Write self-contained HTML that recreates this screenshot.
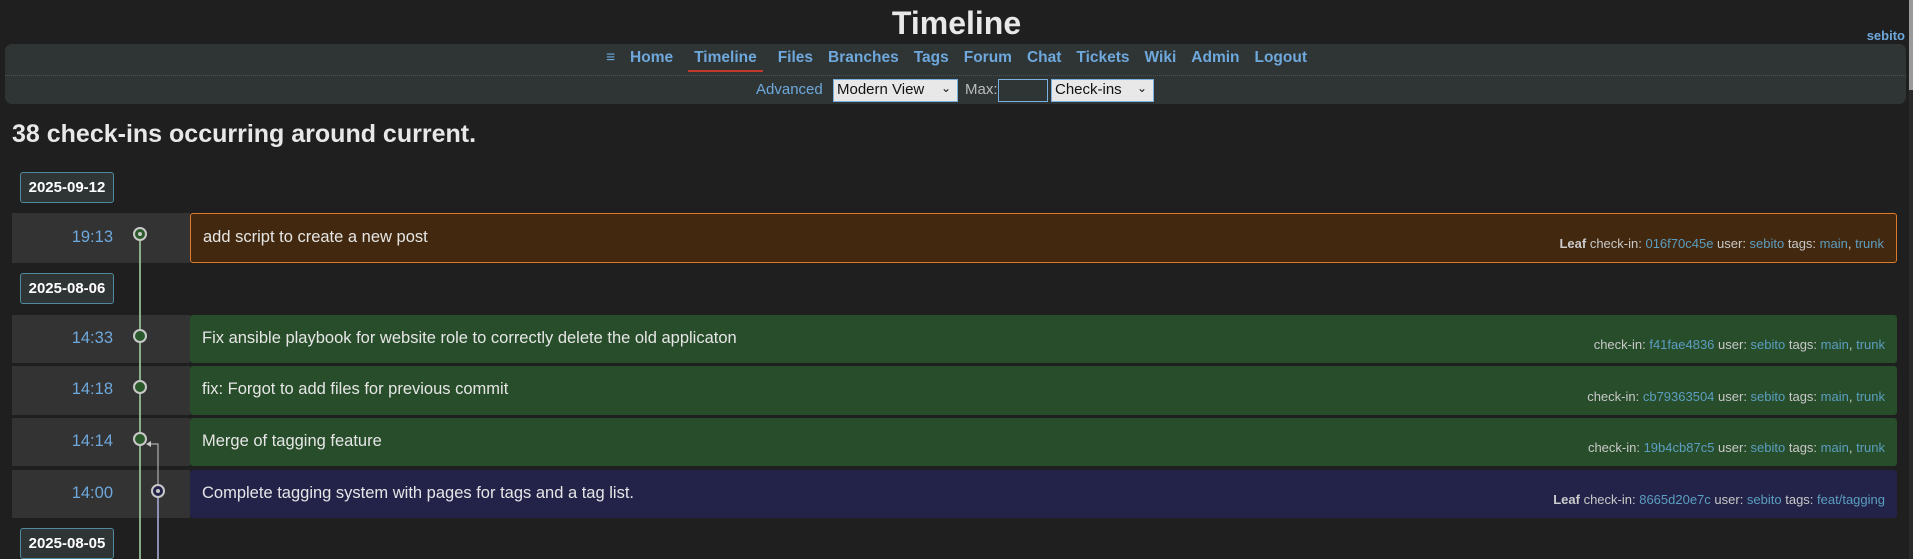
<!DOCTYPE html>
<html><head><meta charset="utf-8"><style>
*{margin:0;padding:0;box-sizing:border-box}
body{width:1913px;height:559px;background:#1f1f1f;font-family:"Liberation Sans",sans-serif;color:#e8e8e8;position:relative;overflow:hidden}
.a{position:absolute}
.title{left:0;width:1913px;top:5px;text-align:center;font-size:32px;font-weight:bold;color:#e8e8e8}
.user{right:8px;top:28px;font-size:13px;font-weight:bold;color:#6ea8dc}
.nav{left:5px;top:44px;width:1901px;height:60px;background:#2f3535;border-radius:7px}
.div{left:5px;top:75px;width:1901px;border-top:1px dotted #4a5050}
.links{left:0;width:1913px;top:49px;text-align:center;font-size:15.5px;font-weight:bold;color:#6ea8dc;white-space:nowrap}
.links span{margin:0 7.5px;display:inline-block;padding-bottom:4px}
.links .cur{border-bottom:2px solid #c0392b;padding:0 6px 3px}
.sel{background:#e8e8e8;border:1px solid #7ab0e0;color:#111;font-size:15px;height:23px;padding:1px 3px;top:79px}
.sel i{position:absolute;right:6px;top:1px;font-style:normal;font-size:12px}
h1{position:absolute;left:12px;top:120px;font-size:25px;font-weight:bold;color:#e8e8e8}
.date{position:absolute;left:20px;width:94px;height:31px;border:1px solid #4f8aa0;border-radius:3px;background:#2f3535;color:#fff;font-weight:bold;font-size:15px;text-align:center;line-height:29px}
.tc{position:absolute;left:12px;width:178px;background:#333;}
.tc span{position:absolute;right:77px;top:14px;color:#6ea8dc;font-size:16.5px}
.msg{position:absolute;left:190px;width:1707px;border-radius:3px}
.msg .t{position:absolute;left:12px;top:14px;font-size:16.5px;color:#e6e6e6}
.msg .m{position:absolute;right:12px;bottom:11px;font-size:13px;color:#c8c8c8}
.m b{color:#ccc}
.m a{color:#5b9ec0;text-decoration:none}
.g{background:#284d2a}
</style></head><body>
<div class="a title">Timeline</div>
<div class="a user">sebito</div>
<div class="a nav"></div>
<div class="a div"></div>
<div class="a links"><span>≡</span><span>Home</span><span class="cur">Timeline</span><span>Files</span><span>Branches</span><span>Tags</span><span>Forum</span><span>Chat</span><span>Tickets</span><span>Wiki</span><span>Admin</span><span>Logout</span></div>
<div class="a" style="left:756px;top:81px;font-size:15px;color:#6ea8dc">Advanced</div>
<div class="a sel" style="left:833px;width:125px">Modern View<i>⌄</i></div>
<div class="a" style="left:965px;top:81px;font-size:15px;color:#bbb">Max:</div>
<div class="a" style="left:998px;top:79px;width:50px;height:23px;border:1px solid #7ab0e0;background:#2f3535"></div>
<div class="a sel" style="left:1051px;width:103px">Check-ins<i>⌄</i></div>
<div class="a" style="left:1909px;top:0;width:4px;height:559px;background:#2a2a2a"></div>
<div class="a" style="left:1909px;top:0;width:4px;height:90px;background:#9a9a9a"></div>

<h1>38 check-ins occurring around current.</h1>

<div class="date" style="top:172px">2025-09-12</div>
<div class="tc" style="top:213px;height:50px"><span style="top:15px">19:13</span></div>
<div class="msg" style="top:213px;height:50px;background:#42280e;border:1px solid #e07a2a"><div class="t" style="top:14px">add script to create a new post</div><div class="m"><b>Leaf</b> check-in: <a>016f70c45e</a> user: <a>sebito</a> tags: <a>main</a>, <a>trunk</a></div></div>

<div class="date" style="top:273px">2025-08-06</div>
<div class="tc" style="top:315px;height:48px"><span>14:33</span></div>
<div class="msg g" style="top:315px;height:48px"><div class="t">Fix ansible playbook for website role to correctly delete the old applicaton</div><div class="m">check-in: <a>f41fae4836</a> user: <a>sebito</a> tags: <a>main</a>, <a>trunk</a></div></div>
<div class="tc" style="top:366px;height:49px"><span>14:18</span></div>
<div class="msg g" style="top:366px;height:49px"><div class="t">fix: Forgot to add files for previous commit</div><div class="m">check-in: <a>cb79363504</a> user: <a>sebito</a> tags: <a>main</a>, <a>trunk</a></div></div>
<div class="tc" style="top:418px;height:48px"><span>14:14</span></div>
<div class="msg g" style="top:418px;height:48px"><div class="t">Merge of tagging feature</div><div class="m">check-in: <a>19b4cb87c5</a> user: <a>sebito</a> tags: <a>main</a>, <a>trunk</a></div></div>
<div class="tc" style="top:470px;height:48px"><span>14:00</span></div>
<div class="msg" style="top:470px;height:48px;background:#23234a"><div class="t">Complete tagging system with pages for tags and a tag list.</div><div class="m"><b>Leaf</b> check-in: <a>8665d20e7c</a> user: <a>sebito</a> tags: <a>feat/tagging</a></div></div>
<div class="date" style="top:528px">2025-08-05</div>

<svg class="a" style="left:0;top:0" width="200" height="559">
<line x1="140" y1="234" x2="140" y2="559" stroke="#a8d8a8" stroke-width="1.5"/>
<line x1="158" y1="490" x2="158" y2="559" stroke="#b0b0e0" stroke-width="1.5"/>
<polyline points="158,484 158,444 148,444" fill="none" stroke="#c8c8c8" stroke-width="1"/>
<polygon points="146,444 151,441 151,447" fill="#c8c8c8"/>
<circle cx="140" cy="234" r="6" fill="#2a5a2c" stroke="#c8c8c8" stroke-width="2"/><circle cx="140" cy="234" r="2" fill="#c8c8c8"/>
<circle cx="140" cy="336" r="6" fill="#2a5a2c" stroke="#c8c8c8" stroke-width="2"/>
<circle cx="140" cy="387" r="6" fill="#2a5a2c" stroke="#c8c8c8" stroke-width="2"/>
<circle cx="140" cy="439" r="6" fill="#2a5a2c" stroke="#c8c8c8" stroke-width="2"/>
<circle cx="158" cy="491" r="6" fill="#23234a" stroke="#c8c8c8" stroke-width="2"/><circle cx="158" cy="491" r="2" fill="#c8c8c8"/>
</svg>
</body></html>
